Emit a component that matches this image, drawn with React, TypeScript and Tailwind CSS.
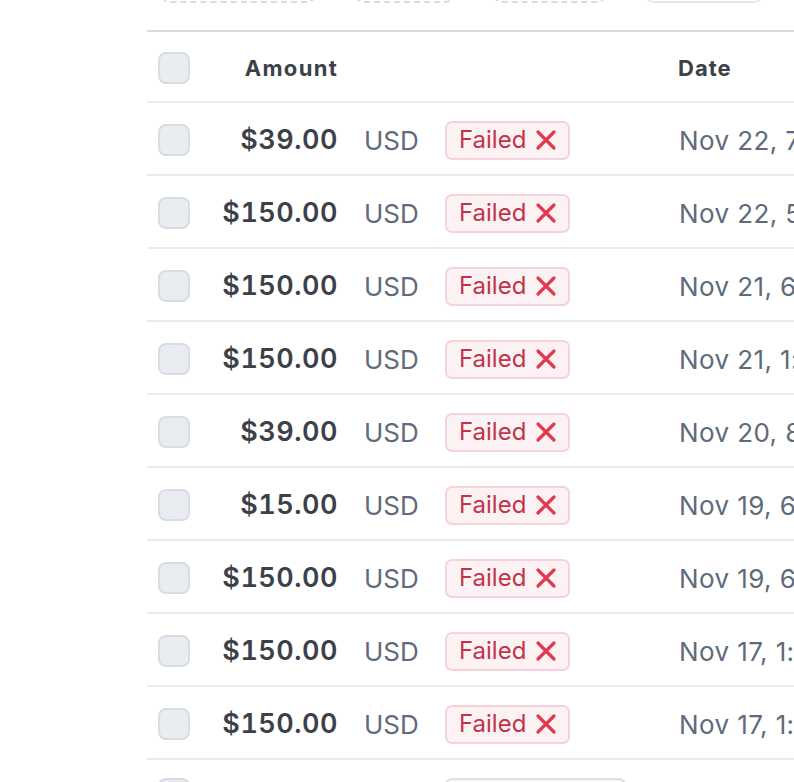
import React from 'react';

interface Payment {
  amount: string;
  date: string;
}

const payments: Payment[] = [
  { amount: '$39.00', date: 'Nov 22, 7:41 PM' },
  { amount: '$150.00', date: 'Nov 22, 5:12 PM' },
  { amount: '$150.00', date: 'Nov 21, 6:03 PM' },
  { amount: '$150.00', date: 'Nov 21, 1:27 PM' },
  { amount: '$39.00', date: 'Nov 20, 8:55 AM' },
  { amount: '$15.00', date: 'Nov 19, 6:40 PM' },
  { amount: '$150.00', date: 'Nov 19, 6:18 PM' },
  { amount: '$150.00', date: 'Nov 17, 1:09 PM' },
  { amount: '$150.00', date: 'Nov 17, 1:02 PM' },
];

const Checkbox = () => (
  <div className="w-[32px] h-[32px] shrink-0 rounded-[8px] border-2 border-[#d9dde3] bg-[#e9ecf0]" />
);

const FailedBadge = () => (
  <span className="inline-flex items-center gap-[9px] h-[39px] w-[125px] px-[12px] rounded-[7px] border-2 border-[#f6d3d9] bg-[#fcf2f4] text-[24px] text-[#c0344a]">
    Failed
    <svg width="22" height="22" viewBox="0 0 22 22" className="shrink-0">
      <path d="M3 3 L19 19 M19 3 L3 19" stroke="#e03a50" strokeWidth="3.2" strokeLinecap="round" />
    </svg>
  </span>
);

export default function App() {
  return (
    <div className="h-screen w-full overflow-hidden bg-white font-['Inter',_'Liberation_Sans',_sans-serif]">
      {/* filter pills, only their bottom edge is left in view */}
      <div className="h-[3px] overflow-hidden flex items-end pl-[160px] gap-[37px]">
        <div className="w-[157px] h-[36px] shrink-0 rounded-[10px] border-2 border-dashed border-[#d9dbe3]" />
        <div className="w-[101px] h-[36px] shrink-0 rounded-[10px] border-2 border-dashed border-[#d9dbe3]" />
        <div className="w-[115px] h-[36px] shrink-0 rounded-[10px] border-2 border-dashed border-[#d9dbe3]" />
        <div className="w-[120px] h-[36px] shrink-0 rounded-[10px] border-2 border-[#e3e6ea]" />
      </div>

      <div className="ml-[147px] mt-[27px] min-w-max">
        <div className="flex items-center h-[73px] pt-[3px] border-t-2 border-b-2 border-[#d8dce1] border-b-[#e9ecef] pl-[11px] text-[22px] font-bold text-[#3c4149]">
          <Checkbox />
          <div className="w-[148px] text-right tracking-[1.3px]">Amount</div>
          <div className="w-[340px]" />
          <div className="tracking-[1px]">Date</div>
        </div>

        {payments.map((p, i) => (
          <div key={i} className="flex items-center h-[73px] pt-[3px] border-b-2 border-[#e9ecef] pl-[11px] text-[26px]">
            <Checkbox />
            <div className="w-[148px] text-right text-[27px] font-semibold tabular-nums tracking-[0.5px] text-[#3c4149]">{p.amount}</div>
            <div className="w-[107px] pl-[26px] text-[#5f6b7a]">USD</div>
            <FailedBadge />
            <div className="pl-[109px] text-[#5f6b7a] whitespace-nowrap tracking-[0.4px]">{p.date}</div>
          </div>
        ))}

        <div className="flex items-start h-[73px] pl-[11px] pt-[18px] text-[26px]">
          <Checkbox />
          <div className="w-[148px] text-right text-[27px] font-semibold tabular-nums tracking-[0.5px] text-[#3c4149]">$150.00</div>
          <div className="w-[107px] pl-[26px] text-[#5f6b7a]">USD</div>
          <span className="inline-flex items-center h-[39px] w-[181px] px-[12px] rounded-[7px] border-2 border-[#dde1e6] bg-[#f6f8fa] text-[24px] text-[#5f6b7a]">
            Refunded
          </span>
        </div>
      </div>
    </div>
  );
}
